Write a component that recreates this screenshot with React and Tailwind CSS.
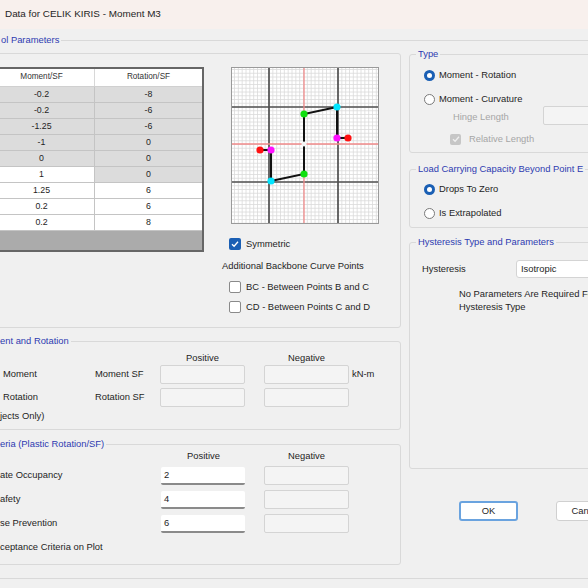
import React from 'react';

// Hinge property dialog (Windows style), cropped view
const rows = [
  ['-0.2', '-8', 'g', 'g'],
  ['-0.2', '-6', 'g', 'g'],
  ['-1.25', '-6', 'g', 'g'],
  ['-1', '0', 'g', 'g'],
  ['0', '0', 'g', 'g'],
  ['1', '0', 'w', 'g'],
  ['1.25', '6', 'w', 'w'],
  ['0.2', '6', 'w', 'w'],
  ['0.2', '8', 'w', 'w'],
];

function Radio({ on }) {
  return on ? (
    <span className="w-[11px] h-[11px] rounded-full bg-[#1a5fb4] flex items-center justify-center shrink-0">
      <span className="w-[5px] h-[5px] rounded-full bg-white" />
    </span>
  ) : (
    <span className="w-[11px] h-[11px] rounded-full bg-white border border-[#7a7a7a] shrink-0" />
  );
}

function Check({ state }) {
  if (state === 'on')
    return (
      <span className="w-[12px] h-[12px] rounded-[2px] bg-[#1a5fb4] flex items-center justify-center shrink-0">
        <svg width="8" height="8" viewBox="0 0 8 8"><path d="M1 4.2 L3.1 6.2 L7 1.8" fill="none" stroke="#fff" strokeWidth="1.3" /></svg>
      </span>
    );
  if (state === 'dis')
    return (
      <span className="w-[11px] h-[11px] rounded-[2px] bg-[#c6c6c6] flex items-center justify-center shrink-0">
        <svg width="8" height="8" viewBox="0 0 8 8"><path d="M1 4.2 L3.1 6.2 L7 1.8" fill="none" stroke="#efefef" strokeWidth="1.3" /></svg>
      </span>
    );
  return <span className="w-[12px] h-[12px] rounded-[2px] bg-white border border-[#8a8a8a] shrink-0" />;
}

function Group({ label, className, children }) {
  return (
    <div className={'relative border border-[#d9d9d9] rounded-[3px] ' + className}>
      {label && (
        <span className="absolute top-[-7px] left-[6px] px-[2px] bg-[#f0f0f0] leading-[12px] text-[#2e3bb0]">{label}</span>
      )}
      {children}
    </div>
  );
}

function DisInput() {
  return <div className="h-[19px] w-[85px] bg-[#f4f4f4] border border-[#d4d4d4] rounded-[2px]" />;
}

function Input({ value }) {
  return (
    <div className="h-[18px] w-[84px] bg-white border-b-2 border-[#8a8a8a] rounded-[2px] px-[3px] leading-[16px]">{value}</div>
  );
}

function Chart() {
  const vx = [];
  const hy = [];
  for (let k = -12; k < 40; k++) {
    const x = 38 + (k * 34.5) / 9;
    if (x > 0 && x < 148) vx.push(x);
  }
  for (let k = -12; k < 42; k++) {
    const y = 40 + k * 3.75;
    if (y > 0 && y < 157) hy.push(y);
  }
  const pts = [
    [29, 83, '#ff1010'], [40, 83, '#ff10ff'], [40, 114, '#00e5ff'], [73, 107, '#10e010'],
    [73, 47, '#10e010'], [106, 40, '#00e5ff'], [106, 71, '#ff10ff'], [117, 71, '#ff1010'],
  ];
  return (
    <div className="w-[148px] h-[157px] bg-white border border-[#9a9a9a]">
      <svg width="146" height="155" viewBox="1 1 146 155">
        {vx.map((x) => <line key={'v' + x} x1={x} y1="0" x2={x} y2="157" stroke="#dadada" strokeWidth="0.8" />)}
        {hy.map((y) => <line key={'h' + y} x1="0" y1={y} x2="148" y2={y} stroke="#dadada" strokeWidth="0.8" />)}
        <line x1="38" y1="0" x2="38" y2="157" stroke="#505050" strokeWidth="1.7" />
        <line x1="107" y1="0" x2="107" y2="157" stroke="#505050" strokeWidth="1.7" />
        <line x1="0" y1="40" x2="148" y2="40" stroke="#505050" strokeWidth="1.7" />
        <line x1="0" y1="115" x2="148" y2="115" stroke="#505050" strokeWidth="1.7" />
        <line x1="73" y1="0" x2="73" y2="157" stroke="#f08a8a" strokeWidth="1.3" />
        <line x1="0" y1="77" x2="148" y2="77" stroke="#f08a8a" strokeWidth="1.3" />
        <polyline points="29,83 40,83 40,114 73,107 73,47 106,40 106,71 117,71" fill="none" stroke="#111" strokeWidth="2" />
        <circle cx="73" cy="77" r="2.5" fill="#f4f4f4" />
        {pts.map(([x, y, c], i) => <circle key={i} cx={x} cy={y} r="3.6" fill={c} />)}
      </svg>
    </div>
  );
}

export default function App() {
  return (
    <div className="w-[588px] h-[588px] overflow-hidden bg-[#f0f0f0] text-[9.4px] text-[#1e1e1e] font-['Liberation_Sans',Arial,sans-serif]">
      {/* title bar */}
      <div className="h-[29px] bg-[#f8f0ed] flex items-center pl-[5px] text-[9.9px]">Data for CELIK KIRIS - Moment M3</div>

      {/* outer control parameters frame */}
      <div className="relative mt-[11px] ml-[-10px] w-[640px] h-[539px] border border-[#d9d9d9]">
        <span className="absolute top-[-7px] left-[8px] px-[2px] bg-[#f0f0f0] leading-[12px] text-[#2e3bb0]">ol Parameters</span>

        <div className="flex items-start">
          {/* left column */}
          <div className="ml-[4px] w-[408px] flex flex-col">
            <Group className="mt-[12px] h-[275px]">
              <div className="flex items-start pt-[13px]">
                {/* table */}
                <div className="ml-[-9px] w-[217px] border-2 border-[#666] bg-[#ababab] text-[8.8px]">
                  <div className="flex h-[18px] bg-white border-b border-[#d0d0d0] text-[8.2px] text-[#333]">
                    <div className="w-[106px] flex items-center justify-center border-r border-[#d8d8d8]">Moment/SF</div>
                    <div className="w-[107px] flex items-center justify-center">Rotation/SF</div>
                  </div>
                  {rows.map(([m, r, a, b], i) => (
                    <div key={i} className="flex h-[16px] border-b border-[#c4c4c4]">
                      <div className={'w-[106px] flex items-center justify-center border-r border-[#c4c4c4] ' + (a === 'g' ? 'bg-[#dcdcdc]' : 'bg-white')}>{m}</div>
                      <div className={'w-[107px] flex items-center justify-center ' + (b === 'g' ? 'bg-[#dcdcdc]' : 'bg-white')}>{r}</div>
                    </div>
                  ))}
                  <div className="h-[19px]" />
                </div>

                {/* chart + options */}
                <div className="ml-[18px] flex flex-col">
                  <div className="ml-[9px]"><Chart /></div>
                  <div className="mt-[14px] ml-[7px] flex items-center gap-[5px] h-[12px]">
                    <Check state="on" />
                    <span>Symmetric</span>
                  </div>
                  <div className="mt-[10px] h-[12px] leading-[12px]">Additional Backbone Curve Points</div>
                  <div className="mt-[9px] ml-[7px] flex items-center gap-[5px] h-[12px]">
                    <Check />
                    <span>BC - Between Points B and C</span>
                  </div>
                  <div className="mt-[8px] ml-[7px] flex items-center gap-[5px] h-[12px]">
                    <Check />
                    <span>CD - Between Points C and D</span>
                  </div>
                </div>
              </div>
            </Group>

            <Group label={<span className="ml-[-4px]">ent and Rotation</span>} className="mt-[13px] h-[89px]">
              <div className="flex mt-[10px] h-[12px] leading-[12px]">
                <div className="w-[164px]" />
                <div className="w-[85px] text-center">Positive</div>
                <div className="w-[19px]" />
                <div className="w-[85px] text-center">Negative</div>
              </div>
              <div className="flex items-center mt-[1px]">
                <div className="w-[99px] pl-[7px]">Moment</div>
                <div className="w-[65px]">Moment SF</div>
                <DisInput />
                <div className="w-[19px]" />
                <DisInput />
                <div className="ml-[3px]">kN-m</div>
              </div>
              <div className="flex items-center mt-[4px]">
                <div className="w-[99px] pl-[7px]">Rotation</div>
                <div className="w-[65px]">Rotation SF</div>
                <DisInput />
                <div className="w-[19px]" />
                <DisInput />
              </div>
              <div className="mt-[3px] pl-[4px] leading-[12px]">jects Only)</div>
            </Group>

            <Group label={<span className="ml-[-4px]">eria (Plastic Rotation/SF)</span>} className="mt-[14px] h-[121px]">
              <div className="flex mt-[5px] h-[12px] leading-[12px]">
                <div className="w-[165px]" />
                <div className="w-[85px] text-center">Positive</div>
                <div className="w-[18px]" />
                <div className="w-[85px] text-center">Negative</div>
              </div>
              {[['ate Occupancy', '2'], ['afety', '4'], ['se Prevention', '6']].map(([l, v], i) => (
                <div key={l} className={'flex items-center ' + (i === 0 ? 'mt-[4px]' : 'mt-[5px]')}>
                  <div className="w-[165px] pl-[4px]">{l}</div>
                  <Input value={v} />
                  <div className="w-[19px]" />
                  <DisInput />
                </div>
              ))}
              <div className="mt-[8px] pl-[4px] leading-[12px]">ceptance Criteria on Plot</div>
            </Group>
          </div>

          {/* right column */}
          <div className="ml-[8px] w-[220px] flex flex-col">
            <Group label="Type" className="mt-[13px] h-[99px]">
              <div className="mt-[14px] pl-[14px] flex items-center gap-[4px] h-[12px]">
                <Radio on />
                <span>Moment - Rotation</span>
              </div>
              <div className="mt-[12px] pl-[14px] flex items-center gap-[4px] h-[12px]">
                <Radio />
                <span>Moment - Curvature</span>
              </div>
              <div className="mt-[1px] pl-[43px] flex items-center h-[19px]">
                <span className="w-[91px] pt-[3px] text-[#a6a6a6]">Hinge Length</span>
                <DisInput />
              </div>
              <div className="mt-[8px] pl-[40px] flex items-center gap-[8px] h-[12px]">
                <Check state="dis" />
                <span className="text-[#a6a6a6]">Relative Length</span>
              </div>
            </Group>

            <Group label="Load Carrying Capacity Beyond Point E" className="mt-[16px] h-[59px]">
              <div className="mt-[13px] pl-[14px] flex items-center gap-[4px] h-[12px]">
                <Radio on />
                <span>Drops To Zero</span>
              </div>
              <div className="mt-[12px] pl-[14px] flex items-center gap-[4px] h-[12px]">
                <Radio />
                <span>Is Extrapolated</span>
              </div>
            </Group>

            <Group label="Hysteresis Type and Parameters" className="mt-[14px] h-[227px]">
              <div className="mt-[17px] pl-[12px] flex items-center h-[18px]">
                <span className="w-[94px]">Hysteresis</span>
                <div className="h-[18px] flex-1 bg-white border border-[#d4d4d4] rounded-[3px] pl-[4px] leading-[16px]">Isotropic</div>
              </div>
              <div className="mt-[9px] pl-[49px] leading-[13px]">
                <div className="whitespace-nowrap">No Parameters Are Required For This</div>
                <div>Hysteresis Type</div>
              </div>
            </Group>

            <div className="mt-[32px] flex">
              <div className="ml-[50px] w-[59px] h-[20px] bg-white border-2 border-[#6aa3df] rounded-[3px] flex items-center justify-center">OK</div>
              <div className="ml-[38px] w-[60px] h-[20px] bg-white border border-[#d0d0d0] rounded-[3px] flex items-center justify-center">Cancel</div>
            </div>
          </div>
        </div>
      </div>
    </div>
  );
}
